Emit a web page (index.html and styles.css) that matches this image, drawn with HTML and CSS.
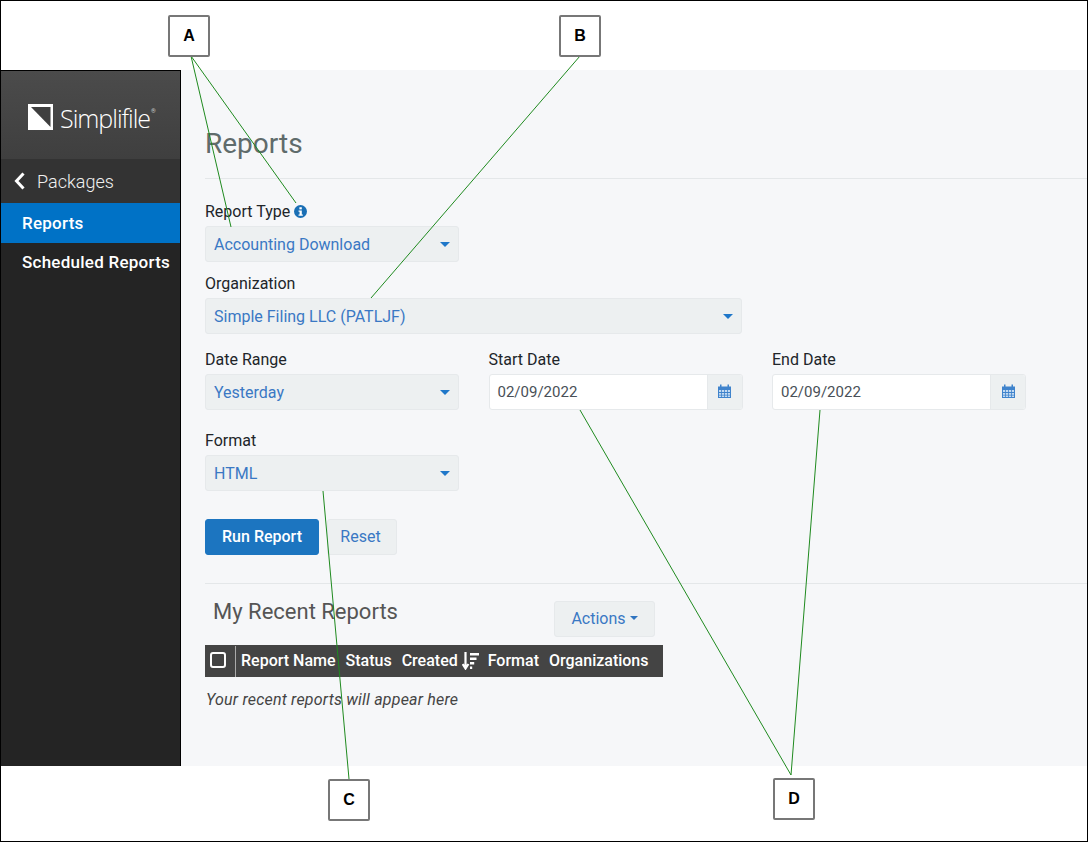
FILE: index.html
```html
<!DOCTYPE html>
<html lang="en">
<head>
<meta charset="utf-8">
<title>Reports</title>
<link rel="stylesheet" href="styles.css">
</head>
<body>
<div class="frame">
  <div class="app">
    <nav class="sidebar">
      <div class="brand">
        <svg class="logo" width="25" height="26" viewBox="0 0 25 26"><rect width="25" height="26" fill="#fff"/><path d="M3 3H22.500V23Z" fill="#3f3f3f"/></svg>
        <span class="brand-name">Simplifile</span><span class="reg">®</span>
      </div>
      <a class="back"><svg width="11" height="18" viewBox="0 0 11 18"><path d="M9.500 1.500L2.500 9L9.500 16.500" fill="none" stroke="#fff" stroke-width="3"/></svg><span>Packages</span></a>
      <a class="nav-item active">Reports</a>
      <a class="nav-item">Scheduled Reports</a>
    </nav>
    <main class="main">
      <h1 class="title">Reports</h1>
      <form class="form">
        <div class="field w254 first">
          <label class="label">Report Type <svg class="info" width="13" height="13" viewBox="0 0 14 14"><circle cx="7" cy="7" r="7" fill="#1a6fb5"/><rect x="5.800" y="2.400" width="2.600" height="2.300" fill="#fff"/><path d="M4.900 6h3.500v4.200h1.100v1.400H4.900v-1.400H6V7.400H4.900Z" fill="#fff"/></svg></label>
          <div class="select"><span>Accounting Download</span><i class="caret"></i></div>
        </div>
        <div class="field w537">
          <label class="label">Organization</label>
          <div class="select"><span>Simple Filing LLC (PATLJF)</span><i class="caret"></i></div>
        </div>
        <div class="row">
          <div class="field w254">
            <label class="label">Date Range</label>
            <div class="select"><span>Yesterday</span><i class="caret"></i></div>
          </div>
          <div class="field w254 date-field">
            <label class="label">Start Date</label>
            <div class="date"><span class="date-value">02/09/2022</span><span class="date-btn"><svg width="13" height="14" viewBox="0 0 13 14"><path d="M0 2.500H2V.5h1.500v2h6v-2H11v2h2V14H0Z" fill="#3f83cc"/><path d="M1 6h2.200v2H1zM4 6h2.200v2H4zM7 6h2.200v2H7zM10 6h2v2h-2zM1 9h2.200v1.800H1zM4 9h2.200v1.800H4zM7 9h2.200v1.800H7zM10 9h2v1.800h-2zM1 11.600h2.200V13H1zM4 11.600h2.200V13H4zM7 11.600h2.200V13H7zM10 11.600h2V13h-2z" fill="#c4dbf2"/></svg></span></div>
          </div>
          <div class="field w254 date-field">
            <label class="label">End Date</label>
            <div class="date"><span class="date-value">02/09/2022</span><span class="date-btn"><svg width="13" height="14" viewBox="0 0 13 14"><path d="M0 2.500H2V.5h1.500v2h6v-2H11v2h2V14H0Z" fill="#3f83cc"/><path d="M1 6h2.200v2H1zM4 6h2.200v2H4zM7 6h2.200v2H7zM10 6h2v2h-2zM1 9h2.200v1.800H1zM4 9h2.200v1.800H4zM7 9h2.200v1.800H7zM10 9h2v1.800h-2zM1 11.600h2.200V13H1zM4 11.600h2.200V13H4zM7 11.600h2.200V13H7zM10 11.600h2V13h-2z" fill="#c4dbf2"/></svg></span></div>
          </div>
        </div>
        <div class="field w254 format">
          <label class="label">Format</label>
          <div class="select"><span>HTML</span><i class="caret"></i></div>
        </div>
        <div class="buttons">
          <button type="button" class="btn primary">Run Report</button>
          <button type="button" class="btn plain reset">Reset</button>
        </div>
      </form>
      <section class="recent">
        <div class="recent-head">
          <h2 class="recent-title">My Recent Reports</h2>
          <button type="button" class="btn plain actions">Actions<i class="mini-caret"></i></button>
        </div>
        <div class="thead">
          <span class="check-cell"><i class="check"></i></span>
          <span class="th name">Report Name</span>
          <span class="th status">Status</span>
          <span class="th created">Created<svg width="17" height="18" viewBox="0 0 17 18"><path d="M3.500 0v15M.6 12l2.900 4.500L6.400 12" fill="none" stroke="#fff" stroke-width="2.200"/><path d="M8 1h9v2.600H8zM8 5.500h6.500v2.600H8zM8 10h4.200v2.600H8zM8 14.500h2.200V17H8z" fill="#fff"/></svg></span>
          <span class="th format-th">Format</span>
          <span class="th orgs">Organizations</span>
        </div>
        <p class="empty">Your recent reports will appear here</p>
      </section>
    </main>
  </div>
  <svg class="leaders" width="1088" height="842" viewBox="0 0 1088 842">
    <path d="M191 56L231 227M191 56L296 203M580 56L371 298M323 491L349 779M580 410L791 775M820 410L791 775" fill="none" stroke="#1f8a1f" stroke-width="1"/>
  </svg>
  <b class="callout a">A</b>
  <b class="callout b">B</b>
  <b class="callout c">C</b>
  <b class="callout d">D</b>
</div>
</body>
</html>
```
FILE: styles.css
```css
* { box-sizing: border-box; }
html, body { margin: 0; padding: 0; background: #fff; }
body { font-family: Roboto, "Liberation Sans", sans-serif; font-size: 16px; color: #212529; }
.frame { position: relative; width: 1088px; height: 842px; border: 1px solid #000; padding-top: 69px; overflow: hidden; }
.app { display: flex; height: 696px; background: #f6f7f9; }
.sidebar { width: 180px; flex: none; background: #242424; border-top: 1px solid #000; border-right: 1px solid #000; display: flex; flex-direction: column; }
.brand { height: 88px; background: linear-gradient(#4b4b4b, #3f3f3f); display: flex; align-items: center; padding: 4px 0 0 27px; color: #fff; }
.logo { flex: none; margin-right: 7px; }
.brand-name { font-family: "Open Sans", Roboto, sans-serif; font-weight: 300; font-size: 25px; letter-spacing: -1px; position: relative; top: 1px; }
.reg { font-size: 6px; align-self: center; margin: -14px 0 0 1px; color: #ccc; }
.back { height: 44px; padding: 1px 0 0 13px; background: #333; color: #f0f0f0; display: flex; align-items: center; font-size: 18px; font-weight: 300; }
.back svg { margin-top: -1px; }
.back span { margin-left: 12px; }
.nav-item { height: 40px; padding-left: 21px; display: flex; align-items: center; color: #fff; font-size: 17px; font-weight: 500; letter-spacing: 0.25px; }
.nav-item + .nav-item { height: 38px; }
.nav-item.active { background: #0072c6; }
.main { flex: 1; min-width: 0; padding: 0 0 0 24px; }
.title { margin: 0; padding-top: 57px; height: 109px; border-bottom: 1px solid #e4e7e9; font-size: 28px; font-weight: 400; line-height: 33px; color: #5f6b6b; }
.form { display: block; }
.field { display: block; }
.field.first { margin-top: 23px; }
.w254 { width: 254px; }
.w537 { width: 537px; margin-top: 12px; }
.format { margin-top: 21px; }
.label { display: flex; align-items: center; gap: 4px; height: 20px; margin-bottom: 4px; font-size: 16px; line-height: 20px; }
.info { position: relative; top: -1px; }
.select { height: 36px; background: #edf0f1; border: 1px solid #e6e9eb; border-radius: 3px; color: #3a78c4; display: flex; align-items: center; justify-content: space-between; padding: 0 8px; font-size: 16px; }
.caret { width: 0; height: 0; border: 5px solid transparent; border-top-color: #1f77c9; border-bottom: 0; }
.row { display: flex; gap: 29.500px; margin-top: 16px; }
.date { height: 36px; display: flex; background: #fff; border: 1px solid #e6e9eb; border-radius: 3px; overflow: hidden; }
.date-value { flex: 1; padding-left: 8px; line-height: 34px; font-size: 15px; color: #495057; }
.date-btn { width: 35px; padding-bottom: 2px; background: #edf0f1; border-left: 1px solid #e6e9eb; display: flex; align-items: center; justify-content: center; }
.buttons { display: flex; gap: 8px; margin-top: 28px; }
.btn { height: 36px; font: inherit; border-radius: 3px; padding: 0 0 2px; }
.primary { width: 114px; background: #1c75c0; border: 1px solid #1c75c0; color: #fff; font-weight: 500; }
.plain { width: 70px; background: #edf0f1; border: 1px solid #e6e9eb; color: #3a78c4; }
.reset { padding-right: 3px; }
.recent { margin-top: 28px; border-top: 1px solid #e4e7e9; }
.recent-head { position: relative; width: 458px; height: 61px; display: flex; align-items: flex-start; }
.recent-title { margin: 15px 0 0 8px; font-size: 22px; line-height: 26px; font-weight: 400; color: #555; }
.actions { width: 101px; margin: 17px 0 0 auto; position: relative; left: -8px; display: inline-flex; align-items: center; justify-content: center; gap: 4px; }
.mini-caret { width: 0; height: 0; border: 4px solid transparent; border-top-color: #2f74c0; border-bottom: 0; }
.thead { width: 458px; height: 32px; padding-bottom: 1px; background: #444; color: #fff; display: flex; align-items: center; font-weight: 500; font-size: 16px; }
.check-cell { width: 31px; height: 31px; margin-bottom: -1px; border-right: 1px solid #aaa; display: flex; align-items: center; padding: 0 0 2px 5px; flex: none; }
.check { display: block; width: 16px; height: 16px; border: 2px solid #fff; border-radius: 3px; }
.th { white-space: nowrap; }
.name { margin-left: 5px; }
.status { margin-left: 10px; }
.created { margin-left: 10px; display: inline-flex; align-items: center; gap: 4px; }
.format-th { margin-left: 9px; }
.orgs { margin-left: 10px; }
.empty { margin: 13px 0 0 1px; font-style: italic; line-height: 19px; color: #444; letter-spacing: 0.2px; }
.leaders { position: absolute; left: -1px; top: -1px; pointer-events: none; }
.callout { position: absolute; width: 42px; height: 42px; background: #fff; border: 2px solid #777; border-radius: 2px; display: flex; align-items: center; justify-content: center; font-family: "Liberation Sans", Arial, sans-serif; font-size: 16px; color: #000; }
.callout.a { left: 167px; top: 14px; }
.callout.b { left: 558px; top: 14px; }
.callout.c { left: 327px; top: 778px; }
.callout.d { left: 772px; top: 777px; }
```
